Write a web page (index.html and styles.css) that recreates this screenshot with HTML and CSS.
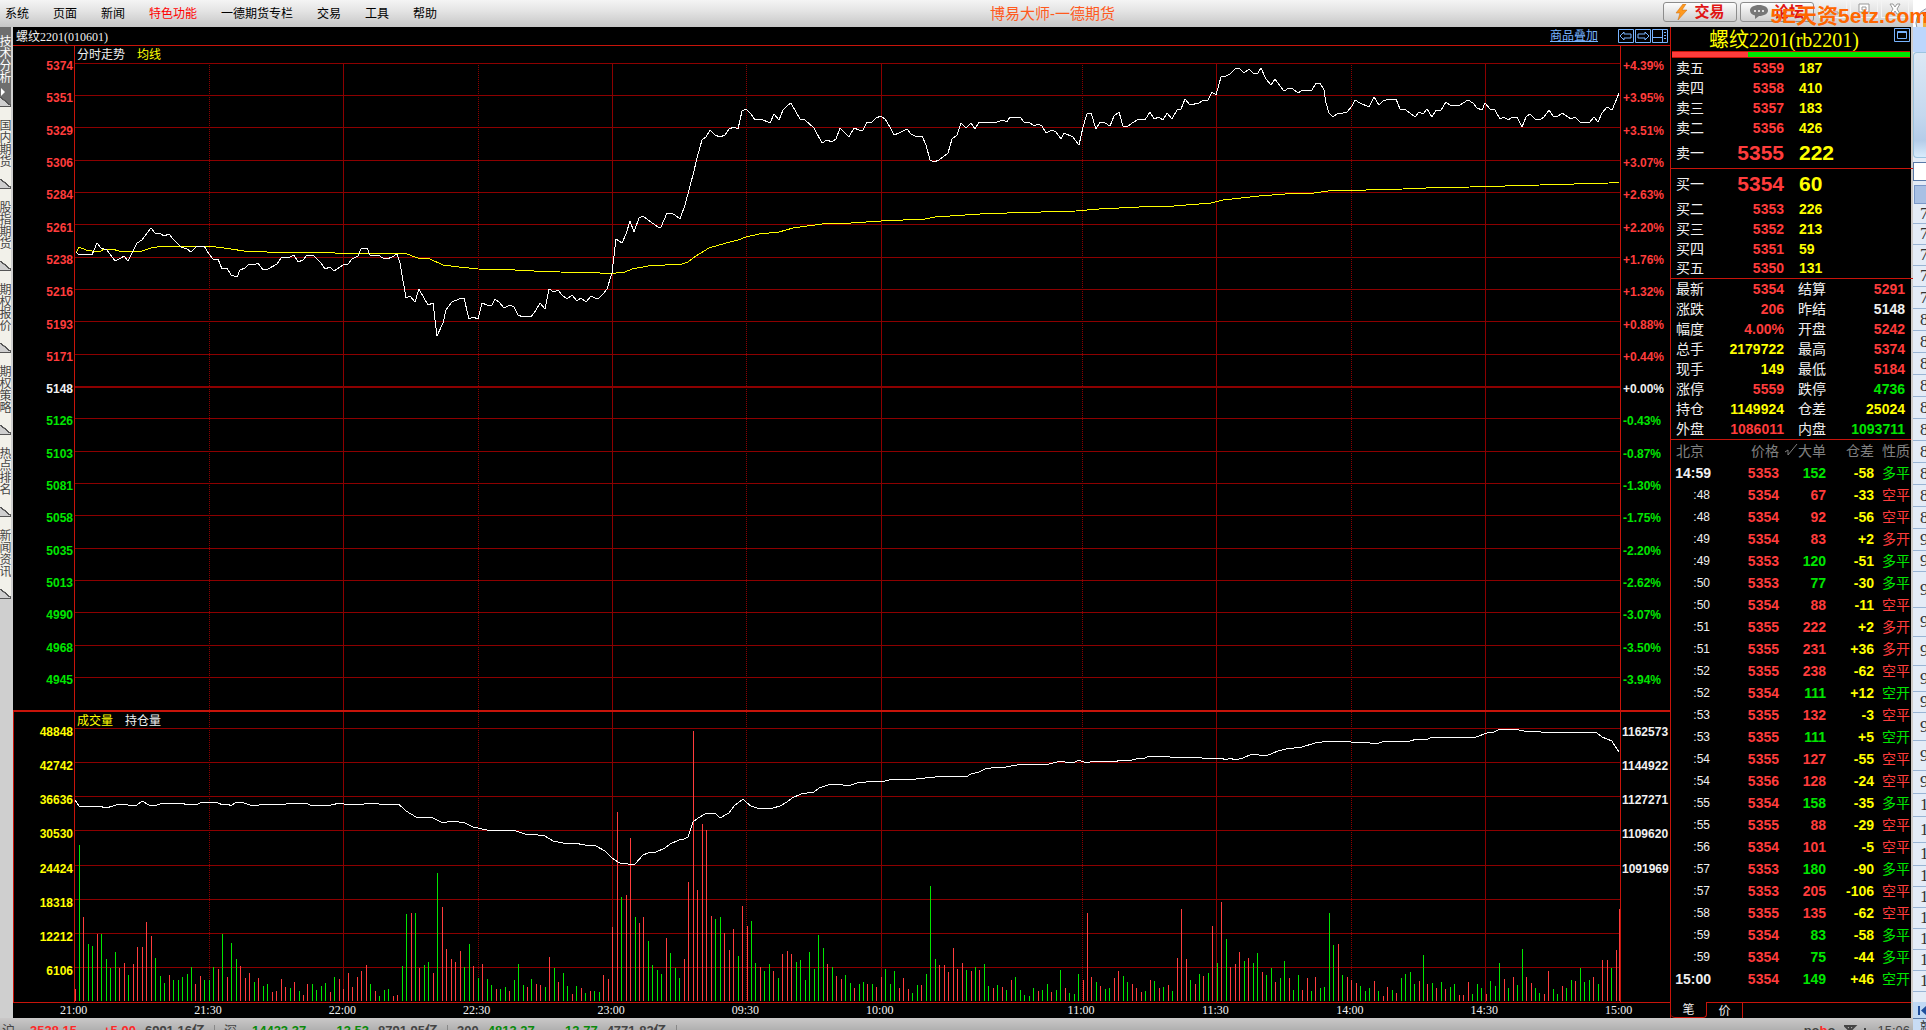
FILE: index.html
```html
<!DOCTYPE html>
<html lang="zh-CN">
<head>
    <meta charset="UTF-8">
    <meta name="viewport" content="width=device-width, initial-scale=1.0">
    <title>博易大师-一德期货</title>
    <link rel="stylesheet" href="styles.css">
</head>
<body>
    <div class="app">
        <header class="menubar">
            <nav class="menu">
                <a href="#">系统</a>
                <a href="#">页面</a>
                <a href="#">新闻</a>
                <a href="#" class="hot">特色功能</a>
                <a href="#">一德期货专栏</a>
                <a href="#">交易</a>
                <a href="#">工具</a>
                <a href="#">帮助</a>
            </nav>
            <h1 class="app-title">博易大师-一德期货</h1>
            <div class="top-buttons">
                <button type="button" class="top-btn">
                    <svg width="13" height="16" viewBox="0 0 13 16"><path d="M8 0L1 9h4L3 16l9-10H7l4-6z" fill="#ff9a1f" stroke="#c96a10" stroke-width="0.5"/></svg>
                    交易
                </button>
                <button type="button" class="top-btn">
                    <svg width="18" height="14" viewBox="0 0 18 14"><path d="M9 0c5 0 9 2.300 9 5.500S14 11 9 11L5 14v-3.500C2 9.800 0 8 0 5.500 0 2.300 4 0 9 0z" fill="#777"/><circle cx="5" cy="6" r="1" fill="#fff"/><circle cx="9" cy="6" r="1" fill="#fff"/><circle cx="13" cy="6" r="1" fill="#fff"/></svg>
                    论坛
                </button>
            </div>
            <div class="win-buttons">
                <button type="button" aria-label="最小化"><svg width="12" height="12" viewBox="0 0 12 12"><path d="M1 9h10v2H1z" fill="#fff" stroke="#999"/></svg></button>
                <button type="button" aria-label="还原"><svg width="12" height="12" viewBox="0 0 12 12"><path d="M1 1h10v8H1zM4 4h4v3H4z" fill="#fff" stroke="#999"/></svg></button>
                <button type="button" aria-label="关闭"><svg width="12" height="12" viewBox="0 0 12 12"><path d="M1 1h3l2 3 2-3h3L8 6l3 5H8L6 8l-2 3H1l3-5z" fill="#fff" stroke="#999"/></svg></button>
            </div>
        </header>

        <main class="workspace">
            <nav class="side-tabs">
                <button type="button" class="active">技术分析<i></i></button>
                <button type="button">国内期货</button>
                <button type="button">股指期货</button>
                <button type="button">期权报价</button>
                <button type="button">期权策略</button>
                <button type="button">热点排名</button>
                <button type="button">新闻资讯</button>
            </nav>

            <section class="charts">
                <div class="chart-head">
                    <span class="chart-name">螺纹2201(010601)</span>
                    <a href="#" class="overlay-link">商品叠加</a>
                    <button type="button" class="tool" aria-label="上一个"><svg width="16" height="14" viewBox="0 0 16 14"><path d="M0.500 0.500h15v13H0.500zM2 7l4-4v2h7v4H6v2z" fill="none" stroke="#78b4ff"/></svg></button>
                    <button type="button" class="tool" aria-label="下一个"><svg width="16" height="14" viewBox="0 0 16 14"><path d="M0.500 0.500h15v13H0.500zM14 7l-4-4v2H3v4h7v2z" fill="none" stroke="#78b4ff"/></svg></button>
                    <button type="button" class="tool" aria-label="布局"><svg width="16" height="14" viewBox="0 0 16 14"><path d="M0.500 0.500h15v13H0.500zM10.500 1v12M1 8.500h9M12 3.500h2M12 6.500h2M12 9.500h2" fill="none" stroke="#78b4ff"/></svg></button>
                </div>

                <div class="pane price-pane">
                    <ul class="axis axis-left" id="priceAxis"></ul>
                    <div class="plot">
                        <svg id="pricePlot" viewBox="75 46 1545 664" preserveAspectRatio="none"></svg>
                        <p class="legend"><span>分时走势</span><span class="yellow">均线</span></p>
                    </div>
                    <ul class="axis axis-right" id="percentAxis"></ul>
                </div>

                <div class="pane volume-pane">
                    <ul class="axis axis-left yellow" id="volumeAxis"></ul>
                    <div class="plot">
                        <svg id="volumePlot" viewBox="75 712 1545 290" preserveAspectRatio="none"></svg>
                        <p class="legend"><span class="yellow">成交量</span><span>持仓量</span></p>
                    </div>
                    <ul class="axis axis-right" id="openAxis"></ul>
                </div>

                <ul class="time-axis">
                    <li>21:00</li><li>21:30</li><li>22:00</li><li>22:30</li><li>23:00</li><li>09:30</li>
                    <li class="long">10:00</li><li>11:00</li><li>11:30</li><li>14:00</li><li>14:30</li><li class="last">15:00</li>
                </ul>
            </section>

            <aside class="quote">
                <div class="quote-head">
                    <h2>螺纹2201(rb2201)</h2>
                    <button type="button" class="tool" aria-label="放大"><svg width="16" height="14" viewBox="0 0 16 14"><path d="M0.500 0.500h15v13H0.500zM3.500 3.500h9v7h-9zM3 4.500h10" fill="none" stroke="#78b4ff"/></svg></button>
                </div>
                <div class="ratio"><div class="ratio-buy"></div></div>

                <table class="depth">
                    <tbody>
                        <tr><th>卖五</th><td>5359</td><td>187</td></tr>
                        <tr><th>卖四</th><td>5358</td><td>410</td></tr>
                        <tr><th>卖三</th><td>5357</td><td>183</td></tr>
                        <tr><th>卖二</th><td>5356</td><td>426</td></tr>
                        <tr class="best"><th>卖一</th><td>5355</td><td>222</td></tr>
                    </tbody>
                </table>
                <table class="depth">
                    <tbody>
                        <tr class="best"><th>买一</th><td>5354</td><td>60</td></tr>
                        <tr><th>买二</th><td>5353</td><td>226</td></tr>
                        <tr><th>买三</th><td>5352</td><td>213</td></tr>
                        <tr><th>买四</th><td>5351</td><td>59</td></tr>
                        <tr><th>买五</th><td>5350</td><td>131</td></tr>
                    </tbody>
                </table>

                <table class="stats">
                    <tbody>
                        <tr><th>最新</th><td class="red">5354</td><th>结算</th><td class="red">5291</td></tr>
                        <tr><th>涨跌</th><td class="red">206</td><th>昨结</th><td>5148</td></tr>
                        <tr><th>幅度</th><td class="red">4.00%</td><th>开盘</th><td class="red">5242</td></tr>
                        <tr><th>总手</th><td class="yellow">2179722</td><th>最高</th><td class="red">5374</td></tr>
                        <tr><th>现手</th><td class="yellow">149</td><th>最低</th><td class="red">5184</td></tr>
                        <tr><th>涨停</th><td class="red">5559</td><th>跌停</th><td class="green">4736</td></tr>
                        <tr><th>持仓</th><td class="yellow">1149924</td><th>仓差</th><td class="yellow">25024</td></tr>
                        <tr><th>外盘</th><td class="red">1086011</td><th>内盘</th><td class="green">1093711</td></tr>
                    </tbody>
                </table>

                <table class="ticks">
                    <thead>
                        <tr><th class="c-time">北京</th><th class="c-price">价格</th><th class="c-vol"><svg width="13" height="12" viewBox="0 0 13 12"><path d="M0 8l3-2v5L12 0" fill="none" stroke="#808080"/></svg>大单</th><th class="c-diff">仓差</th><th class="c-kind">性质</th></tr>
                    </thead>
                    <tbody id="ticks"></tbody>
                </table>

                <div class="quote-tabs">
                    <button type="button" class="active">笔</button>
                    <button type="button">价</button>
                </div>
            </aside>
        </main>

        <footer class="statusbar">
            <span class="market">沪</span><b class="up">3528.15</b><b class="up change">+5.00</b><b>6991.16亿</b><i></i>
            <span class="market">深</span><b class="down">14423.37</b><b class="down change">-13.53</b><b>8791.95亿</b><i></i>
            <b>300</b><b class="down">4813.27</b><b class="down change">-13.77</b><b>4771.82亿</b><i></i>
            <span class="brand">po<em>b</em>o</span>
            <svg width="24" height="12" viewBox="0 0 24 12"><path d="M1 1h10L6 6zM6 1v11M16 8v4M21 3v9" fill="none" stroke="#444" stroke-width="2"/></svg>
            <b class="clock">15:06</b>
        </footer>
    </div>

    <div class="sheet">
        <div class="sheet-top">
            <svg width="13" height="27" viewBox="0 0 13 27"><circle cx="18" cy="23" r="15" fill="#e4e8ee" stroke="#8a94a8"/><path d="M10 12h6v4h-6z" fill="#d03020"/><path d="M10 18h6v9h-6z" fill="#f0b040"/></svg>
        </div>
        <div class="sheet-tabs"></div>
        <div class="sheet-ribbon"></div>
        <div class="sheet-formula"></div>
        <div class="sheet-corner"></div>
        <ol class="sheet-rows" id="sheetRows"></ol>
        <div class="sheet-nav"><svg width="8" height="9" viewBox="0 0 8 9"><path d="M0 0h2v9H0zM8 0v9L3 4.500z" fill="#1f4e9c"/></svg></div>
        <div class="sheet-status">就绪</div>
    </div>

    <p class="watermark">5E天资5etz.com</p>

    <script src="script.js"></script>
</body>
</html>
```
FILE: styles.css
```css
* { box-sizing: border-box; }
body { margin: 0; height: 100vh; display: flex; overflow: hidden; position: relative; background: #c8c8c8; color: #f0f0f0; font-family: "Liberation Sans", "Noto Sans CJK SC", sans-serif; font-size: 12px; }
h1, h2, p, ul, ol { margin: 0; padding: 0; font-weight: normal; }
ul, ol { list-style: none; }
button { margin: 0; padding: 0; border: 0; background: none; font: inherit; color: inherit; cursor: pointer; }
svg { display: block; }
table { border-collapse: collapse; table-layout: fixed; width: 100%; }
th, td { padding: 0; font-weight: normal; text-align: left; white-space: nowrap; }

.red { color: #ff3c3c; }
.green { color: #00e600; }
.yellow { color: #ffff00; }

.app { flex: 1; min-width: 0; display: flex; flex-direction: column; }

/* menu bar */
.menubar { height: 27px; flex: none; display: flex; align-items: center; background: linear-gradient(#f4f4f4, #e4e4e4 40%, #c6c6c6); padding-left: 5px; }
.menu { display: flex; gap: 24px; }
.menu a { color: #000; text-decoration: none; line-height: 24px; }
.menu .hot { color: #ff0000; }
.app-title { flex: 1; text-align: center; font-size: 15px; line-height: 24px; padding-left: 5px; color: #ff5a1e; }
.top-buttons { display: flex; gap: 3px; align-self: flex-start; padding-top: 2px; }
.top-btn { width: 74px; height: 20px; border: 1px solid #8c8c8c; border-radius: 3px; background: linear-gradient(#fdfdfd, #cfcfcf); color: #e01414; font-size: 15px; font-weight: bold; line-height: 18px; display: flex; align-items: center; justify-content: center; gap: 6px; }
.win-buttons { display: flex; gap: 3px; align-self: flex-start; padding-left: 5px; margin-right: 4px; }
.win-buttons button { width: 28px; height: 18px; border: 1px solid #f4f4f4; border-top: 0; display: flex; align-items: center; justify-content: center; }

.workspace { flex: 1; min-height: 0; display: flex; }

/* left tabs */
.side-tabs { width: 13px; padding-right: 2px; background: #cfcfcf; flex: none; }
.side-tabs button { position: relative; display: flex; align-items: center; justify-content: flex-start; width: 11px; height: 82px; overflow: hidden; background: #f2f1ea; color: #444; writing-mode: vertical-rl; font-size: 12px; line-height: 12px; border-bottom: 1px solid #555; padding: 12px 3px 0 0; }
.side-tabs button::after { content: ""; position: absolute; left: 0; right: 0; bottom: 0; height: 9px; background: linear-gradient(to top right, #cfcfcf 46%, #555 47%, #555 56%, transparent 57%); }
.side-tabs .active { background: #6e6e6e; color: #fff; gap: 5px; height: 80px; padding-top: 8px; }
.side-tabs i { border: 4px solid transparent; border-left-color: #fff; border-right: 0; margin-left: -2px; }

/* charts */
.charts { flex: 1; min-width: 0; display: flex; flex-direction: column; background: #000; }
.chart-head { height: 19px; flex: none; display: flex; align-items: center; gap: 1px; padding: 0 2px 1px 3px; border-bottom: 1px solid #c8140a; font-family: "Liberation Serif", "Noto Sans CJK SC", serif; }
.chart-name { flex: 1; }
.overlay-link { color: #78b4ff; margin-right: 19px; line-height: 16px; }
.pane { min-height: 0; display: grid; grid-template-columns: 62px minmax(0, 1fr) 50px; grid-template-rows: minmax(0, 1fr); }
.price-pane { flex: 664 1 0; }
.volume-pane { flex: 290 1 0; border: 0 solid #c8140a; border-width: 2px 0 1px 1px; grid-template-columns: 61px minmax(0, 1fr) 50px; }
.plot { display: grid; grid-template-rows: minmax(0, 1fr); min-width: 0; }
.plot svg { grid-area: 1 / 1; width: 100%; height: 100%; shape-rendering: crispEdges; }
.legend { grid-area: 1 / 1; display: flex; gap: 12px; padding-left: 2px; line-height: 18px; }
.axis { display: grid; grid-auto-rows: 1fr; align-items: center; font-weight: bold; line-height: 14px; white-space: nowrap; }
.axis-left { border-right: 1px solid #c8140a; text-align: right; padding-right: 1px; }
.axis-right { border-left: 1px solid #c8140a; padding-left: 2px; }
.price-pane .axis { padding-top: 4px; padding-bottom: 14px; }
.volume-pane .axis { padding-top: 3px; padding-bottom: 14px; grid-template-rows: repeat(8, 1fr); }
.volume-pane .axis-right { padding-left: 1px; }
.time-axis { height: 15px; flex: none; display: flex; padding: 0 50px 0 62px; margin: 0 15px 0 -15px; font-family: "Liberation Serif", serif; line-height: 15px; }
.time-axis li { flex: 30 1 0; width: 0; }
.time-axis .long { flex-grow: 45; }
.time-axis .last { flex: none; }

.grid { fill: #8c0000; }
.dots { stroke: #8c0000; stroke-dasharray: 1 1; }
.line { fill: none; stroke: #fff; }
.avg { stroke: #ffff00; }
.bar-up { fill: #ff3c3c; }
.bar-down { fill: #00e600; }

/* quote panel */
.quote { width: 243px; flex: none; display: flex; flex-direction: column; background: #000; border-left: 1px solid #c8140a; border-right: 2px solid #cfcbc8; font-size: 14px; }
.quote-head { height: 24px; display: flex; align-items: flex-start; padding: 1px 1px 0 3px; }
.quote-head h2 { flex: 1; text-align: center; color: #ffff00; font-family: "Liberation Serif", "Noto Sans CJK SC", serif; font-size: 20px; line-height: 24px; }
.ratio { height: 7px; border: 1px solid #c8140a; border-width: 1px 0; margin: 0 1px; background: #00e600; }
.ratio-buy { width: 32%; height: 100%; background: #ff3c3c; }
.quote tr { height: 20px; line-height: 18px; }
.quote td { font-weight: bold; }
.quote th:first-child { padding-left: 5px; }

.depth { border-bottom: 1px solid #c8140a; }
.quote .depth tr { line-height: 16px; }
.depth th { width: 50px; }
.depth td { width: 128px; color: #ffff00; }
.depth td:nth-child(2) { width: 78px; padding-right: 15px; text-align: right; color: #ff3c3c; }
.quote .depth .best { height: 30px; line-height: 26px; }
.depth .best td { font-size: 21px; }

.stats { border-bottom: 1px solid #c8140a; }
.stats th { width: 42px; }
.stats td { text-align: right; }
.stats td:nth-child(2) { width: 85px; padding-right: 14px; }
.stats td:last-child { padding-right: 6px; }

.ticks tr { height: 22px; line-height: 20px; }
.ticks th { color: #808080; text-align: right; }
.ticks td { text-align: right; }
.ticks .c-time { width: 40px; text-align: left; }
.ticks .c-price { width: 68px; }
.ticks .c-vol { width: 47px; }
.ticks .c-vol svg { display: inline-block; }
.ticks .c-diff { width: 48px; }
.ticks .c-kind, .ticks td:last-child { font-weight: normal; padding-right: 1px; }
.ticks .sec { font-size: 12px; font-weight: normal; padding-right: 1px; }

.quote-tabs { margin-top: auto; height: 16px; display: flex; font-size: 12px; line-height: 14px; border-top: 1px solid #c8140a; }
.quote-tabs button { width: 36px; border-right: 1px solid #c8140a; }
.quote-tabs .active { border-bottom: 1px solid #c8140a; border-radius: 0 0 4px 4px; margin-top: -1px; background: #000; }

/* status bar */
.statusbar { height: 12px; flex: none; overflow: hidden; display: flex; gap: 9px; padding: 0 3px 0 2px; background: linear-gradient(#cac8c8, #b0b0b0); color: #444; font-size: 13px; line-height: 26px; white-space: nowrap; }
.statusbar i { width: 1px; height: 20px; margin-top: 7px; background: #888; }
.statusbar .market { margin-right: 6px; }
.statusbar .up { color: #ff2828; }
.statusbar .down { color: #0a8a0a; }
.statusbar .change { margin-left: 17px; }
.statusbar svg { margin-top: 7px; }
.statusbar .brand { margin-left: auto; font-weight: bold; }
.statusbar em { color: #ff2828; font-style: normal; }
.statusbar .clock { font-weight: normal; }

/* spreadsheet window behind */
.sheet { width: 13px; flex: none; overflow: hidden; display: flex; flex-direction: column; background: #e4ecf7; color: #333; }
.sheet-top { height: 27px; background: #fff; }
.sheet-tabs { height: 25px; background: #bcd6fc; }
.sheet-ribbon { height: 106px; margin-bottom: 4px; border: 1px solid #9cc4e0; border-right: 0; border-radius: 4px 0 0 4px; background: linear-gradient(#dce8f5, #c4d8ee 60%, #b4cce8 84%, #d8ecfc); }
.sheet-formula { height: 19px; background: #fff; border: 1px solid #5a7aa8; border-right: 0; }
.sheet-corner { height: 19px; margin: 4px 0 0 1px; background: #a8c0e4; border: 1px solid #7a98c8; border-right: 0; }
.sheet-rows li { border-bottom: 1px solid #9ab4d4; padding-left: 7px; font-family: "Liberation Serif", serif; font-size: 17px; display: flex; align-items: center; }
.sheet-nav { margin-top: auto; height: 17px; padding: 4px 0 0 5px; background: #c0d8f4; border-bottom: 1px solid #5a7aa8; }
.sheet-status { height: 11px; overflow: hidden; padding-left: 7px; background: #c8dcf4; line-height: 16px; white-space: nowrap; }

.watermark { position: absolute; right: -2px; top: 2px; font-size: 21px; line-height: 28px; font-weight: bold; color: #ff6600; white-space: nowrap; }
```
FILE: script.js
```js
const red = 'red', green = 'green';

// 坐标轴
const prices = [5374, 5351, 5329, 5306, 5284, 5261, 5238, 5216, 5193, 5171, 5148, 5126, 5103, 5081, 5058, 5035, 5013, 4990, 4968, 4945];
const percents = ['+4.39%', '+3.95%', '+3.51%', '+3.07%', '+2.63%', '+2.20%', '+1.76%', '+1.32%', '+0.88%', '+0.44%', '+0.00%', '-0.43%', '-0.87%', '-1.30%', '-1.75%', '-2.20%', '-2.62%', '-3.07%', '-3.50%', '-3.94%'];
const priceLines = [63, 95, 127, 160, 192, 224, 257, 289, 321, 354, 386, 418, 451, 483, 515, 548, 580, 612, 645, 677];
const volumeLines = [728, 762, 796, 830, 865, 899, 933, 967];
const solidTimes = [343, 612, 881, 1216, 1485];
const dottedTimes = [209, 478, 746, 1082, 1351];

const priceLine = '76,252 79,255 83,254 92,255 97,243 101,248 107,250 115,261 121,258 124,256 128,261 137,243 142,240 147,233 151,228 155,233 160,233 164,236 169,234 173,239 181,247 187,249 191,252 196,247 204,246 209,254 213,259 218,259 222,269 227,268 231,275 237,277 240,270 245,268 249,264 254,265 258,263 263,270 268,269 277,264 281,258 290,257 294,255 298,262 303,260 307,255 313,255 317,259 321,263 325,269 330,267 334,271 343,265 348,264 352,259 358,256 361,249 367,248 370,255 378,255 383,258 387,259 392,257 397,254 400,263 406,298 410,296 415,302 419,289 424,298 428,305 433,303 437,336 443,323 446,310 452,302 459,299 464,298 469,319 473,317 478,319 482,303 487,305 492,305 495,299 499,302 504,308 510,305 514,307 518,315 523,317 527,316 531,317 536,310 540,303 545,309 549,289 554,292 558,290 562,295 567,299 572,295 577,301 581,298 586,302 591,296 595,298 599,298 604,293 607,289 612,273 616,239 622,243 626,234 630,221 634,232 639,218 643,216 648,220 658,227 661,227 667,213 671,213 675,215 680,219 685,205 694,171 697,158 702,140 706,137 710,130 715,135 720,137 725,135 729,129 734,127 738,129 742,111 746,109 751,114 755,120 761,119 770,123 774,114 779,120 783,110 788,105 791,103 796,112 800,119 805,120 814,128 822,143 827,140 832,142 836,139 840,128 849,137 854,128 859,130 863,130 867,122 872,122 876,118 881,116 885,119 890,127 894,135 899,133 907,129 911,134 917,137 922,136 926,145 930,160 934,162 939,160 948,153 952,139 957,135 961,123 966,128 971,123 975,129 979,122 989,123 997,122 1003,120 1007,122 1010,117 1020,117 1024,122 1029,122 1034,126 1038,124 1042,126 1046,133 1052,130 1056,132 1061,139 1064,133 1073,137 1079,145 1083,127 1087,114 1091,113 1096,129 1100,122 1105,123 1110,126 1114,116 1119,112 1123,126 1127,127 1132,123 1139,119 1145,120 1150,112 1154,119 1159,117 1163,120 1167,113 1172,119 1177,110 1181,109 1185,99 1190,105 1199,103 1204,100 1208,100 1212,92 1216,95 1221,77 1226,76 1230,74 1235,69 1239,68 1244,73 1249,69 1253,73 1258,73 1261,68 1266,79 1271,85 1275,79 1280,86 1284,91 1289,88 1293,89 1298,93 1303,90 1312,90 1316,83 1320,83 1324,90 1326,103 1329,113 1333,117 1338,113 1343,113 1347,112 1352,106 1355,100 1360,103 1369,107 1374,97 1379,105 1383,101 1389,99 1396,99 1400,109 1406,110 1415,117 1419,112 1423,114 1427,109 1432,117 1436,110 1441,110 1446,102 1450,105 1459,106 1463,103 1468,100 1473,103 1477,108 1482,110 1485,103 1490,109 1495,110 1500,119 1504,117 1508,120 1513,117 1517,117 1522,127 1526,117 1530,114 1535,119 1540,120 1544,117 1549,110 1553,116 1557,117 1562,113 1571,119 1575,117 1580,122 1589,123 1594,117 1598,122 1602,113 1607,107 1612,110 1615,103 1619,93';
const avgLine = '76,253 79,247 86,250 92,251 101,251 104,249 112,249 119,251 142,251 151,248 163,246 209,246 231,249 244,251 265,251 267,252 333,252 335,253 404,253 418,258 430,259 443,265 459,267 478,269 515,270 534,271 560,272 600,273 612,274 616,273 625,272 632,269 648,266 665,265 682,264 688,262 696,256 709,248 726,243 738,240 746,237 759,234 779,232 793,228 822,224 851,223 881,221 925,219 935,217 980,214 1007,213 1076,211 1099,209 1159,206 1174,206 1211,203 1223,200 1259,196 1285,194 1314,193 1335,190 1366,190 1403,189 1426,188 1470,187 1540,185 1609,183 1619,182';
const openLine = '75,800 79,806 99,806 106,808 113,806 119,804 128,805 137,805 142,801 149,805 157,805 163,803 176,804 182,803 187,805 198,804 202,802 212,802 218,803 223,805 228,804 231,806 236,802 241,802 250,805 259,805 264,804 286,804 288,803 306,803 312,806 319,805 331,805 340,803 344,804 364,804 373,803 379,804 393,805 398,804 402,807 406,811 416,817 431,817 441,822 447,822 452,821 465,823 473,827 487,830 510,831 513,830 525,834 538,835 545,836 553,841 563,843 574,843 585,845 596,846 605,851 612,858 618,862 622,864 626,863 630,865 635,864 643,855 648,853 656,852 665,848 670,844 679,840 684,839 688,837 693,822 698,818 707,813 715,813 720,818 729,813 734,806 743,799 747,803 751,806 760,809 773,808 780,806 787,802 792,798 801,794 814,792 819,788 831,784 843,785 851,785 857,783 876,781 881,782 889,780 904,779 912,780 916,779 944,776 957,777 961,776 966,777 971,774 979,772 985,769 997,767 1006,767 1022,764 1049,764 1061,761 1065,762 1075,762 1079,760 1086,763 1094,761 1111,761 1114,762 1121,760 1128,761 1136,759 1145,758 1149,756 1166,756 1174,758 1195,757 1202,758 1216,759 1221,758 1226,760 1230,758 1235,760 1243,758 1252,754 1266,756 1278,751 1286,749 1302,747 1315,743 1329,741 1333,742 1336,741 1348,741 1351,742 1366,742 1370,743 1379,743 1385,741 1410,741 1417,739 1428,739 1432,737 1469,737 1472,738 1476,737 1490,732 1494,732 1500,729 1514,729 1524,731 1541,732 1562,732 1569,733 1576,732 1584,733 1588,732 1597,733 1602,737 1612,741 1615,746 1619,752';

// 每分钟一根量柱：正数红，负数绿
const volumes = [
    12, -156, 84, -57, -55, 67, -67, -42, -33, -49, 33, 38, -26, 37, 54, 54, 79, 65, -43, -25, -18, 26, -21, -21, -24, -27, -34, 17, 25, -21,
    -21, -34, 32, -67, 24, -58, -42, 35, 23, 28, -19, 23, -15, -17, 9, 10, 22, 14, -13, 19, -10, 6, 17, -17, -11, -15, -18, 9, -24, 22,
    12, 28, 14, 24, 30, 36, -17, 10, -5, -11, -12, 5, 6, -35, -87, 88, -88, 33, -36, -39, 28, -128, 94, 52, 42, 39, 50, -34, -57, 35,
    -23, 37, -22, -16, 12, -12, -14, 10, -21, -37, -16, 14, -22, 17, 16, -14, 44, -33, 19, -28, -15, 7, -15, 13, -8, 10, -10, -9, 26, 22,
    74, 189, -104, 106, 163, -84, 78, 84, -60, -36, -31, -27, 63, -48, -33, -23, 42, 119, 270, 111, 177, 171, 85, -82, -84, 68, 51, 72, -45, 95,
    75, -80, -38, 34, -30, -37, 30, -23, 47, 50, 47, -39, -41, -21, -49, -32, -66, -53, 37, -34, 25, 22, -26, -18, 13, -17, -19, 17, -17, 14,
    24, -32, -17, -30, 13, 23, 12, -8, -16, 16, -27, -115, -42, 36, 36, 29, 53, 32, 38, -31, 30, -34, 31, -37, -15, 13, -16, 14, -11, 21,
    -24, -11, -6, -5, -13, 10, -11, -17, 9, -11, -31, 13, -8, -7, -27, 21, 88, 24, -19, 15, -12, -13, 23, 30, -25, -19, 17, 13, 9, -10,
    21, -20, 13, -14, 16, -10, 43, 92, 42, -21, 17, -27, 25, -28, 75, -38, 99, -62, 34, 37, 49, -40, 43, -38, -48, 29, -26, -33, 19, -23,
    -40, 23, -11, -26, 11, 23, -10, 24, -13, -14, -88, -56, 57, -26, 24, 21, 18, -15, -10, -13, 20, -10, 5, 14, -11, 8, -23, -27, -29, -17,
    20, -46, 17, -18, 13, -19, 12, -14, -17, 6, 6, 19, -7, -17, -13, 7, -20, -15, -38, 22, -13, 24, -16, -52, 24, 18, -13, -8, 7, 30,
    -12, -7, 15, -13, -21, 20, -33, -19, -21, 24, -17, 41, 41, -33, 51, 92
];

const ticks = [
    ['14:59', 5353, 152, green, '-58', '多平', green],
    [':48', 5354, 67, red, '-33', '空平', red],
    [':48', 5354, 92, red, '-56', '空平', red],
    [':49', 5354, 83, red, '+2', '多开', red],
    [':49', 5353, 120, green, '-51', '多平', green],
    [':50', 5353, 77, green, '-30', '多平', green],
    [':50', 5354, 88, red, '-11', '空平', red],
    [':51', 5355, 222, red, '+2', '多开', red],
    [':51', 5355, 231, red, '+36', '多开', red],
    [':52', 5355, 238, red, '-62', '空平', red],
    [':52', 5354, 111, green, '+12', '空开', green],
    [':53', 5355, 132, red, '-3', '空平', red],
    [':53', 5355, 111, green, '+5', '空开', green],
    [':54', 5355, 127, red, '-55', '空平', red],
    [':54', 5356, 128, red, '-24', '空平', red],
    [':55', 5354, 158, green, '-35', '多平', green],
    [':55', 5355, 88, red, '-29', '空平', red],
    [':56', 5354, 101, red, '-5', '空平', red],
    [':57', 5353, 180, green, '-90', '多平', green],
    [':57', 5353, 205, red, '-106', '空平', red],
    [':58', 5355, 135, red, '-62', '空平', red],
    [':59', 5354, 83, green, '-58', '多平', green],
    [':59', 5354, 75, green, '-44', '多平', green],
    ['15:00', 5354, 149, green, '+46', '空开', green]
];

// 表格行高，从第75行开始
const rowHeights = [20, 21, 21, 21, 22, 22, 22, 22, 22, 22, 22, 22, 22, 22, 22, 22, 21, 36, 29, 29, 26, 21, 28, 30, 23, 23, 26, 23, 21, 21, 21, 21, 21, 21];

function fillAxis(id, values, colorOf) {
    document.getElementById(id).innerHTML = values
        .map((v, i) => `<li class="${colorOf ? colorOf(i) : ''}">${v}</li>`).join('');
}

function gridLines(lines, top, height) {
    let out = lines.map(y => `<rect class="grid" x="75" y="${y}" width="1545" height="${y === 386 ? 2 : 1}"/>`).join('');
    out += solidTimes.map(x => `<rect class="grid" x="${x}" y="${top}" width="1" height="${height}"/>`).join('');
    out += dottedTimes.map(x => `<path class="dots" d="M${x + 0.5} ${top}v${height}"/>`).join('');
    return out;
}

const priceColor = i => i < 10 ? red : i > 10 ? green : '';
fillAxis('priceAxis', prices, priceColor);
fillAxis('percentAxis', percents, priceColor);
fillAxis('volumeAxis', [48848, 42742, 36636, 30530, 24424, 18318, 12212, 6106]);
fillAxis('openAxis', [1162573, 1144922, 1127271, 1109620, 1091969]);

document.getElementById('pricePlot').innerHTML = gridLines(priceLines, 63, 647) +
    `<polyline class="line avg" points="${avgLine}"/><polyline class="line" points="${priceLine}"/>`;

const bars = volumes.map((v, i) => {
    const h = Math.abs(v);
    const x = Math.min(1619, Math.floor(75 + i * 4.48));
    return `<rect class="${v > 0 ? 'bar-up' : 'bar-down'}" x="${x}" y="${1001 - h}" width="1" height="${h}"/>`;
}).join('');
document.getElementById('volumePlot').innerHTML = gridLines(volumeLines, 712, 290) + bars +
    `<polyline class="line" points="${openLine}"/>`;

document.getElementById('ticks').innerHTML = ticks.map(t =>
    `<tr><td class="${t[0].length < 4 ? 'sec' : ''}">${t[0]}</td><td class="red">${t[1]}</td><td class="${t[3]}">${t[2]}</td><td class="yellow">${t[4]}</td><td class="${t[6]}">${t[5]}</td></tr>`
).join('');

document.getElementById('sheetRows').innerHTML = rowHeights
    .map((h, i) => `<li style="height: ${h}px">${75 + i}</li>`).join('');
```
